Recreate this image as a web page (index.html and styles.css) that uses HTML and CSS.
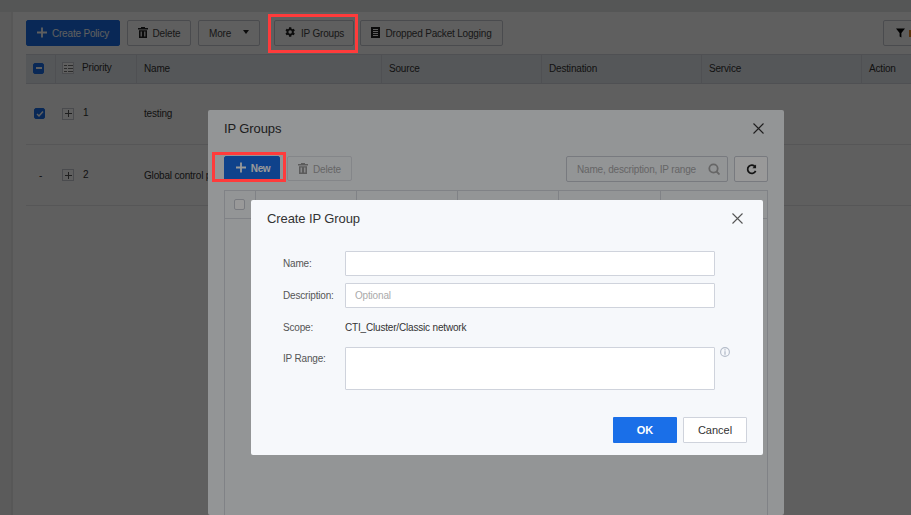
FILE: index.html
```html
<!DOCTYPE html>
<html lang="en">
<head>
    <meta charset="UTF-8">
    <title>IP Groups</title>
    <link rel="stylesheet" href="styles.css">
</head>
<body>
    <div class="topbar"></div>
    <div class="page">
        <div class="toolbar">
            <button class="btn btn-primary btn-create">
                <svg class="icon-plus" width="10" height="11" viewBox="0 0 11 11"><path d="M4.500 0h2v4.500H11v2H6.500V11h-2V6.500H0v-2h4.500z"/></svg>
                Create Policy
            </button>
            <button class="btn btn-del">
                <svg class="icon" width="10" height="11" viewBox="0 0 10 11"><path d="M3 0h4v1h3v1.500H0V1h3zM1 3.200h8V11H1zM2.600 4.500v5h1.200v-5zM6.200 4.500v5h1.200v-5z"/></svg>
                Delete
            </button>
            <button class="btn btn-more">More <span class="caret"></span></button>
            <button class="btn btn-ip">
                <svg class="icon" width="12" height="12" viewBox="0 0 24 24"><path d="M19.400 13a7.500 7.500 0 0 0 0-2l2.300-1.800-2.200-3.800-2.700 1.100a7.500 7.500 0 0 0-1.800-1L14.500 2.600h-4.400L9.700 5.500a7.500 7.500 0 0 0-1.800 1L5.200 5.400 3 9.200 5.300 11a7.500 7.500 0 0 0 0 2L3 14.800l2.200 3.800 2.700-1.100a7.500 7.500 0 0 0 1.800 1l.4 2.900h4.400l.4-2.900a7.500 7.500 0 0 0 1.800-1l2.700 1.100 2.200-3.800zM12.300 15.500a3.500 3.500 0 1 1 0-7 3.500 3.500 0 0 1 0 7z"/></svg>
                IP Groups
            </button>
            <button class="btn btn-log">
                <svg class="icon" width="9" height="11" viewBox="0 0 9 11"><path d="M0 0h9v11H0zM2 2v1h5V2zM2 4v1h5V4zM2 6v1h5V6zM2 8v1h5V8z" fill-rule="evenodd"/></svg>
                Dropped Packet Logging
            </button>
            <button class="btn btn-filter">
                <svg width="9" height="10" viewBox="0 0 10 10"><path d="M0 0h10L6 5v5L4 9V5z"/></svg>
            </button>
        </div>

        <div class="policy-table">
            <div class="policy-row policy-head">
                <div class="cell"><span class="check check-on">
                    <svg width="8" height="8" viewBox="0 0 8 8"><path d="M1 3h6v2H1z" fill="#fff"/></svg>
                </span></div>
                <div class="cell cell-priority">
                    <span class="expand-box">
                        <svg width="9" height="7" viewBox="0 0 9 7"><path d="M0 0h3v1H0zM0 3h3v1H0zM0 6h3v1H0zM4 0h5v1H4zM4 3h5v1H4zM4 6h5v1H4z" fill="#777"/></svg>
                    </span>
                    <span class="priority-label">Priority</span>
                </div>
                <div class="cell">Name</div>
                <div class="cell">Source</div>
                <div class="cell">Destination</div>
                <div class="cell">Service</div>
                <div class="cell">Action</div>
            </div>
            <div class="policy-row">
                <div class="cell"><span class="check check-on">
                    <svg width="8" height="8" viewBox="0 0 8 8"><path d="M1 4l2 2 4-4.500" fill="none" stroke="#fff" stroke-width="1.500"/></svg>
                </span></div>
                <div class="cell cell-priority">
                    <span class="expand-box"><svg width="7" height="7" viewBox="0 0 7 7"><path d="M3 0h1v3h3v1H4v3H3V4H0V3h3z" fill="#555"/></svg></span>
                    <span class="priority-num">1</span>
                </div>
                <div class="cell">testing</div>
                <div class="cell"></div><div class="cell"></div><div class="cell"></div><div class="cell"></div>
            </div>
            <div class="policy-row policy-row-last">
                <div class="cell cell-dash">-</div>
                <div class="cell cell-priority">
                    <span class="expand-box"><svg width="7" height="7" viewBox="0 0 7 7"><path d="M3 0h1v3h3v1H4v3H3V4H0V3h3z" fill="#555"/></svg></span>
                    <span class="priority-num">2</span>
                </div>
                <div class="cell">Global control policy</div>
                <div class="cell"></div><div class="cell"></div><div class="cell"></div><div class="cell"></div>
            </div>
        </div>
    </div>

    <div class="mask mask-page"></div>

    <div class="dialog groups-dialog">
        <div class="dialog-head">
            <h2>IP Groups</h2>
            <svg class="close" width="11" height="11" viewBox="0 0 11 11"><path d="M.5.5l10 10M10.500.5l-10 10" fill="none" stroke="#333" stroke-width="1.100"/></svg>
        </div>
        <div class="groups-tools">
            <button class="btn btn-primary btn-new">
                <svg class="icon-plus" width="10" height="11" viewBox="0 0 11 11"><path d="M4.500 0h2v4.500H11v2H6.500V11h-2V6.500H0v-2h4.500z"/></svg>
                New
            </button>
            <button class="btn btn-disabled">
                <svg class="icon" width="10" height="11" viewBox="0 0 10 11"><path d="M3 0h4v1h3v1.500H0V1h3zM1 3.200h8V11H1zM2.600 4.500v5h1.200v-5zM6.200 4.500v5h1.200v-5z"/></svg>
                Delete
            </button>
            <div class="search">
                <span>Name, description, IP range</span>
                <svg width="12" height="12" viewBox="0 0 12 12"><circle cx="5.500" cy="5.500" r="4.200" fill="none" stroke="#aaa" stroke-width="1.800"/><path d="M8.500 8.500l3 3" stroke="#aaa" stroke-width="1.800"/></svg>
            </div>
            <button class="btn btn-refresh">
                <svg width="11" height="11" viewBox="0 0 12 12"><path d="M10 3.200A4.500 4.500 0 1 0 10.500 7.500" fill="none" stroke="#222" stroke-width="1.900"/><path d="M11 .5v4H7z" fill="#222"/></svg>
            </button>
        </div>
        <div class="groups-table">
            <div class="groups-head">
                <div class="gcell"><span class="check"></span></div>
                <div class="gcell"></div><div class="gcell"></div><div class="gcell"></div><div class="gcell"></div><div class="gcell"></div>
            </div>
        </div>
    </div>

    <div class="mask"></div>

    <div class="dialog create-dialog">
        <div class="dialog-head create-head">
            <h2>Create IP Group</h2>
            <svg class="close" width="11" height="11" viewBox="0 0 11 11"><path d="M.5.5l10 10M10.500.5l-10 10" fill="none" stroke="#555" stroke-width="1.100"/></svg>
        </div>
        <form class="form">
            <label>Name:</label>
            <input class="field" type="text">
            <label>Description:</label>
            <input class="field" type="text" placeholder="Optional">
            <label>Scope:</label>
            <div class="scope">CTI_Cluster/Classic network</div>
            <label class="label-top">IP Range:</label>
            <div class="range-wrap">
                <textarea class="field range"></textarea>
                <svg class="info" width="10" height="10" viewBox="0 0 10 10"><circle cx="5" cy="5" r="4.400" fill="none" stroke="#b4bcc9" stroke-width="1.100"/><path d="M5 2.300v1.200M5 4.300v3.400" stroke="#b4bcc9" stroke-width="1.300"/></svg>
            </div>
        </form>
        <div class="dialog-foot">
            <button class="btn-ok">OK</button>
            <button class="btn-cancel">Cancel</button>
        </div>
    </div>

    <div class="callout callout-ip"></div>
    <div class="callout callout-new"></div>
</body>
</html>
```

FILE: styles.css
```css
* {
    box-sizing: border-box;
}

html, body {
    margin: 0;
    height: 100%;
    overflow: hidden;
}

body {
    width: 911px;
    height: 515px;
    position: relative;
    font-family: "Liberation Sans", Arial, sans-serif;
    font-size: 10px;
    letter-spacing: -0.18px;
    color: #333;
    background: #f6f6f6;
}

.topbar {
    height: 12px;
    background: #e6e7e9;
}

.page {
    height: 503px;
    margin-left: 11px;
    background: #fff;
    border-left: 2px solid #ebebeb;
    padding: 8px 0 0 13px;
    overflow: hidden;
}

.toolbar {
    display: flex;
    height: 26px;
    position: relative;
}

.btn {
    height: 26px;
    padding: 0;
    display: flex;
    align-items: center;
    justify-content: center;
    font-family: inherit;
    font-size: 10px;
    letter-spacing: inherit;
    color: #444;
    background: #fff;
    border: 1px solid #c8ccd4;
    border-radius: 2px;
}

.btn-primary {
    background: #1a6fe8;
    border-color: #1a6fe8;
    color: #fff;
}

.icon {
    margin: -2px 5px 0 0;
    fill: #222;
}

.icon-plus {
    fill: #fff;
    margin: -2px 5px 0 0;
}

.btn-create {
    width: 94px;
}

.btn-del {
    width: 64px;
    margin-left: 7px;
}

.btn-more {
    width: 62px;
    margin-left: 7px;
    justify-content: flex-start;
    padding-left: 10px;
}

.caret {
    margin: -3px 0 0 12px;
    border: 3px solid transparent;
    border-top: 4px solid #222;
    border-bottom: 0;
    width: 6px;
}

.btn-ip {
    width: 80px;
    margin-left: 14px;
}

.btn-log {
    width: 143px;
    margin-left: 6px;
}

.btn-filter {
    width: 40px;
    position: absolute;
    left: 857px;
    justify-content: flex-start;
    padding-left: 12px;
}

.btn-filter::after {
    content: "";
    width: 2px;
    height: 7px;
    margin-left: 4px;
    background: #f08a24;
}

.policy-table {
    margin-top: 8px;
    width: 885px;
}

.policy-row {
    display: grid;
    grid-template-columns: 29px 81px 245px 160px 160px 160px 50px;
    height: 61px;
    border-bottom: 1px solid #e8e9ec;
}

.policy-head {
    height: 30px;
    background: #e6ebf0;
    border-top: 1px solid #d5d9e0;
    border-bottom: 1px solid #d5d9e0;
}

.cell {
    display: flex;
    align-items: center;
    padding: 0 0 1px 7px;
    border-left: 1px solid transparent;
    white-space: nowrap;
    overflow: hidden;
}

.policy-row-last .cell {
    padding-bottom: 0;
}

.policy-head .cell {
    padding-bottom: 2px;
    border-left-color: #d5d9e0;
}

.policy-head .cell:first-child {
    border-left: 0;
}

.policy-row .cell-priority {
    padding-left: 6px;
}

.cell-dash {
    padding-left: 12px;
}

.check {
    display: flex;
    align-items: center;
    justify-content: center;
    width: 11px;
    height: 11px;
    border: 1px solid #c8ccd4;
    border-radius: 2px;
    background: #fff;
}

.check-on {
    background: #1a6fe8;
    border-color: #1a6fe8;
}

.expand-box {
    display: flex;
    align-items: center;
    justify-content: center;
    width: 12px;
    height: 12px;
    border: 1px solid #c8ccd4;
    background: #fff;
    flex: none;
}

.priority-label {
    margin: -2px 0 0 8px;
}

.priority-num {
    margin: -2px 0 0 9px;
}

.mask {
    position: absolute;
    inset: 0;
    background: rgba(0, 0, 0, 0.4);
}

.mask-page {
    background: rgba(0, 0, 0, 0.38);
}

.dialog {
    position: absolute;
    background: #f6f8fb;
    border-radius: 2px;
}

.groups-dialog {
    display: flex;
    flex-direction: column;
    left: 208px;
    top: 110px;
    width: 576px;
    height: 405px;
    padding: 0 16px;
}

.create-dialog {
    left: 251px;
    top: 200px;
    width: 512px;
    height: 255px;
    padding: 0 16px;
}

.dialog-head {
    display: flex;
    justify-content: space-between;
    align-items: center;
    flex: none;
    height: 36px;
    padding-right: 4px;
}

.dialog-head h2 {
    margin: 0;
    font-size: 13px;
    font-weight: normal;
    letter-spacing: -0.1px;
    color: #333;
}

.close {
    flex: none;
}

.groups-tools {
    display: flex;
    flex: none;
    margin-top: 10px;
}

.btn-new {
    width: 56px;
    height: 25px;
    padding-left: 2px;
    font-weight: bold;
    letter-spacing: -0.4px;
}

.btn-disabled {
    width: 65px;
    height: 25px;
    margin-left: 7px;
    padding-top: 1px;
    color: #aaa;
    background: #f6f8fb;
    border-color: #dcdfe5;
}

.btn-disabled .icon {
    fill: #999;
}

.search {
    display: flex;
    align-items: center;
    justify-content: space-between;
    width: 162px;
    height: 26px;
    margin-left: auto;
    padding: 0 7px 0 10px;
    color: #aaa;
    background: #f6f8fb;
    border: 1px solid #c8ccd4;
    border-radius: 2px;
}

.btn-refresh {
    width: 34px;
    margin-left: 6px;
    background: #fff;
}

.groups-table {
    flex: 1;
    margin-top: 8px;
    border: 1px solid #d5d9e0;
    border-bottom: 0;
}

.groups-head {
    display: grid;
    grid-template-columns: 30px 101px 101px 101px 102px 1fr;
    height: 28px;
    border-bottom: 1px solid #d5d9e0;
}

.gcell {
    display: flex;
    align-items: center;
    padding-left: 9px;
    border-left: 1px solid #d5d9e0;
}

.gcell:first-child {
    border-left: 0;
}

.form {
    display: grid;
    grid-template-columns: 62px 370px;
    grid-template-rows: 25px 25px 25px 43px;
    row-gap: 7px;
    margin: 15px 0 0 16px;
    align-items: center;
}

.form .range-wrap {
    align-self: stretch;
}

.form label {
    padding-bottom: 1px;
    color: #555;
}

.form .label-top {
    align-self: start;
    padding: 6px 0 0;
}

.field {
    display: block;
    width: 100%;
    height: 100%;
    margin: 0;
    padding: 0 9px;
    font-family: inherit;
    font-size: 10px;
    letter-spacing: inherit;
    background: #fff;
    border: 1px solid #cfd3dc;
    border-radius: 1px;
    outline: none;
    resize: none;
}

.field::placeholder {
    color: #aaa;
}

.scope {
    padding-bottom: 1px;
    color: #333;
}

.range-wrap {
    position: relative;
    height: 43px;
}

.info {
    position: absolute;
    left: 375px;
    top: 0;
}

.dialog-foot {
    display: flex;
    justify-content: flex-end;
    margin-top: 27px;
}

.btn-ok, .btn-cancel {
    width: 64px;
    height: 26px;
    padding: 0;
    font-family: inherit;
    border-radius: 1px;
}

.btn-ok {
    font-size: 11px;
    font-weight: bold;
    color: #fff;
    background: #1a6fe8;
    border: 0;
}

.btn-cancel {
    margin-left: 6px;
    font-size: 11px;
    color: #333;
    background: #fff;
    border: 1px solid #cfd3dc;
}

.callout {
    position: absolute;
    border: 3px solid #ff3b3b;
}

.callout-ip {
    left: 268px;
    top: 14px;
    width: 90px;
    height: 39px;
}

.callout-new {
    left: 212px;
    top: 152px;
    width: 74px;
    height: 30px;
}
```
